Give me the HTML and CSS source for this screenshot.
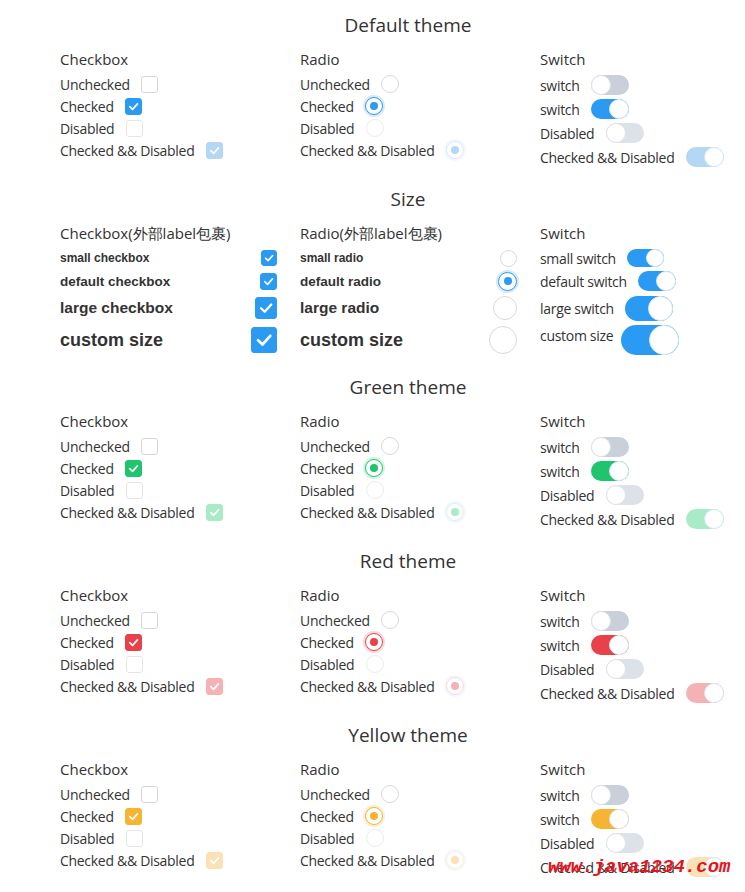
FILE: index.html
```html
<!DOCTYPE html>
<html lang="en">
<head>
    <meta charset="UTF-8">
    <meta name="viewport" content="width=device-width, initial-scale=1.0">
    <title>Checkbox / Radio / Switch</title>
    <link rel="stylesheet" href="styles.css">
</head>
<body>
    <div class="page">

        <!-- Default theme -->
        <div class="section theme-blue">
            <h2 class="section-title">Default theme</h2>
            <div class="grid">
                <div class="col">
                    <div class="col-title">Checkbox</div>
                    <div class="row">Unchecked <span class="cb"></span></div>
                    <div class="row">Checked <span class="cb on"><svg viewBox="0 0 16 16"><polyline points="4,8.2 7,11 12.2,5.2"/></svg></span></div>
                    <div class="row">Disabled <span class="cb off"></span></div>
                    <div class="row">Checked &amp;&amp; Disabled <span class="cb on-off"><svg viewBox="0 0 16 16"><polyline points="4,8.2 7,11 12.2,5.2"/></svg></span></div>
                </div>
                <div class="col">
                    <div class="col-title">Radio</div>
                    <div class="row">Unchecked <span class="rd"></span></div>
                    <div class="row">Checked <span class="rd on"></span></div>
                    <div class="row">Disabled <span class="rd off"></span></div>
                    <div class="row">Checked &amp;&amp; Disabled <span class="rd on-off"></span></div>
                </div>
                <div class="col">
                    <div class="col-title">Switch</div>
                    <div class="row sw-row">switch <span class="sw"></span></div>
                    <div class="row sw-row">switch <span class="sw on"></span></div>
                    <div class="row sw-row">Disabled <span class="sw off"></span></div>
                    <div class="row sw-row">Checked &amp;&amp; Disabled <span class="sw on-off"></span></div>
                </div>
            </div>
        </div>

        <!-- Size -->
        <div class="section theme-blue">
            <h2 class="section-title">Size</h2>
            <div class="grid">
                <div class="col">
                    <div class="col-title">Checkbox(外部label包裹)</div>
                    <label class="size-row s-small">small checkbox <span class="cb on"><svg viewBox="0 0 16 16"><polyline points="4,8.2 7,11 12.2,5.2"/></svg></span></label>
                    <label class="size-row s-default">default checkbox <span class="cb on"><svg viewBox="0 0 16 16"><polyline points="4,8.2 7,11 12.2,5.2"/></svg></span></label>
                    <label class="size-row s-large">large checkbox <span class="cb on"><svg viewBox="0 0 16 16"><polyline points="4,8.2 7,11 12.2,5.2"/></svg></span></label>
                    <label class="size-row s-custom">custom size <span class="cb on"><svg viewBox="0 0 16 16"><polyline points="4,8.2 7,11 12.2,5.2"/></svg></span></label>
                </div>
                <div class="col">
                    <div class="col-title">Radio(外部label包裹)</div>
                    <label class="size-row s-small">small radio <span class="rd"></span></label>
                    <label class="size-row s-default">default radio <span class="rd on"></span></label>
                    <label class="size-row s-large">large radio <span class="rd"></span></label>
                    <label class="size-row s-custom">custom size <span class="rd"></span></label>
                </div>
                <div class="col">
                    <div class="col-title">Switch</div>
                    <div class="row sw-size sw-small">small switch <span class="sw on"></span></div>
                    <div class="row sw-size sw-default">default switch <span class="sw on"></span></div>
                    <div class="row sw-size sw-large">large switch <span class="sw on"></span></div>
                    <div class="row sw-size sw-custom"><span class="sw-label">custom size</span> <span class="sw on"></span></div>
                </div>
            </div>
        </div>

        <!-- Green theme -->
        <div class="section theme-green">
            <h2 class="section-title">Green theme</h2>
            <div class="grid">
                <div class="col">
                    <div class="col-title">Checkbox</div>
                    <div class="row">Unchecked <span class="cb"></span></div>
                    <div class="row">Checked <span class="cb on"><svg viewBox="0 0 16 16"><polyline points="4,8.2 7,11 12.2,5.2"/></svg></span></div>
                    <div class="row">Disabled <span class="cb off"></span></div>
                    <div class="row">Checked &amp;&amp; Disabled <span class="cb on-off"><svg viewBox="0 0 16 16"><polyline points="4,8.2 7,11 12.2,5.2"/></svg></span></div>
                </div>
                <div class="col">
                    <div class="col-title">Radio</div>
                    <div class="row">Unchecked <span class="rd"></span></div>
                    <div class="row">Checked <span class="rd on"></span></div>
                    <div class="row">Disabled <span class="rd off"></span></div>
                    <div class="row">Checked &amp;&amp; Disabled <span class="rd on-off"></span></div>
                </div>
                <div class="col">
                    <div class="col-title">Switch</div>
                    <div class="row sw-row">switch <span class="sw"></span></div>
                    <div class="row sw-row">switch <span class="sw on"></span></div>
                    <div class="row sw-row">Disabled <span class="sw off"></span></div>
                    <div class="row sw-row">Checked &amp;&amp; Disabled <span class="sw on-off"></span></div>
                </div>
            </div>
        </div>

        <!-- Red theme -->
        <div class="section theme-red">
            <h2 class="section-title">Red theme</h2>
            <div class="grid">
                <div class="col">
                    <div class="col-title">Checkbox</div>
                    <div class="row">Unchecked <span class="cb"></span></div>
                    <div class="row">Checked <span class="cb on"><svg viewBox="0 0 16 16"><polyline points="4,8.2 7,11 12.2,5.2"/></svg></span></div>
                    <div class="row">Disabled <span class="cb off"></span></div>
                    <div class="row">Checked &amp;&amp; Disabled <span class="cb on-off"><svg viewBox="0 0 16 16"><polyline points="4,8.2 7,11 12.2,5.2"/></svg></span></div>
                </div>
                <div class="col">
                    <div class="col-title">Radio</div>
                    <div class="row">Unchecked <span class="rd"></span></div>
                    <div class="row">Checked <span class="rd on"></span></div>
                    <div class="row">Disabled <span class="rd off"></span></div>
                    <div class="row">Checked &amp;&amp; Disabled <span class="rd on-off"></span></div>
                </div>
                <div class="col">
                    <div class="col-title">Switch</div>
                    <div class="row sw-row">switch <span class="sw"></span></div>
                    <div class="row sw-row">switch <span class="sw on"></span></div>
                    <div class="row sw-row">Disabled <span class="sw off"></span></div>
                    <div class="row sw-row">Checked &amp;&amp; Disabled <span class="sw on-off"></span></div>
                </div>
            </div>
        </div>

        <!-- Yellow theme -->
        <div class="section theme-yellow">
            <h2 class="section-title">Yellow theme</h2>
            <div class="grid">
                <div class="col">
                    <div class="col-title">Checkbox</div>
                    <div class="row">Unchecked <span class="cb"></span></div>
                    <div class="row">Checked <span class="cb on"><svg viewBox="0 0 16 16"><polyline points="4,8.2 7,11 12.2,5.2"/></svg></span></div>
                    <div class="row">Disabled <span class="cb off"></span></div>
                    <div class="row">Checked &amp;&amp; Disabled <span class="cb on-off"><svg viewBox="0 0 16 16"><polyline points="4,8.2 7,11 12.2,5.2"/></svg></span></div>
                </div>
                <div class="col">
                    <div class="col-title">Radio</div>
                    <div class="row">Unchecked <span class="rd"></span></div>
                    <div class="row">Checked <span class="rd on"></span></div>
                    <div class="row">Disabled <span class="rd off"></span></div>
                    <div class="row">Checked &amp;&amp; Disabled <span class="rd on-off"></span></div>
                </div>
                <div class="col">
                    <div class="col-title">Switch</div>
                    <div class="row sw-row">switch <span class="sw"></span></div>
                    <div class="row sw-row">switch <span class="sw on"></span></div>
                    <div class="row sw-row">Disabled <span class="sw off"></span></div>
                    <div class="row sw-row">Checked &amp;&amp; Disabled <span class="sw on-off"></span></div>
                </div>
            </div>
        </div>

        <div class="watermark">www.java1234.com</div>
    </div>
</body>
</html>
```

FILE: styles.css
```css
body {
    margin: 0;
    font-family: "Open Sans", Arial, sans-serif;
    color: #333;
    background-color: #fff;
    overflow: hidden;
}

.page {
    position: relative;
    width: 696px;
    margin-left: 60px;
    padding-top: 8px;
}

/* theme colours */
.theme-blue {
    --main: #2a9af3;
    --light: #b3d7f4;
    --halo: #d6eafb;
}

.theme-green {
    --main: #1fc46c;
    --light: #a8ebc6;
    --halo: #d2f5e1;
}

.theme-red {
    --main: #e9414a;
    --light: #f5b2b5;
    --halo: #fad8da;
}

.theme-yellow {
    --main: #f5b431;
    --light: #fbe2b6;
    --halo: #fcefd4;
}

.section {
    padding-bottom: 13px;
}

.section-title {
    margin: 0 0 4px;
    font-size: 19px;
    font-weight: normal;
    line-height: 34px;
    text-align: center;
}

.grid {
    display: grid;
    grid-template-columns: 240px 240px 1fr;
}

.col-title {
    font-size: 15px;
    line-height: 27px;
}

.row {
    display: flex;
    align-items: center;
    height: 22px;
    font-size: 14px;
    letter-spacing: -0.3px;
    white-space: pre;
}

.sw-row {
    height: 24px;
}

/* checkbox */
.cb {
    display: inline-flex;
    box-sizing: border-box;
    width: 17px;
    height: 17px;
    margin-left: 8px;
    border: 1px solid #d6d6d6;
    border-radius: 3px;
    background-color: #fff;
}

.cb svg {
    width: 100%;
    height: 100%;
}

.cb polyline {
    fill: none;
    stroke: #fff;
    stroke-width: 1.8;
    stroke-linecap: round;
    stroke-linejoin: round;
}

.cb.on {
    border-color: var(--main);
    background-color: var(--main);
}

.cb.off {
    border-color: #e6e6e6;
}

.cb.on-off {
    border-color: var(--light);
    background-color: var(--light);
}

/* radio */
.rd {
    position: relative;
    display: inline-block;
    box-sizing: border-box;
    width: 18px;
    height: 18px;
    margin-left: 8px;
    border: 1px solid #d9d9d9;
    border-radius: 50%;
    background-color: #fff;
}

.rd.on {
    border-color: var(--main);
    box-shadow: 0 0 0 2px var(--halo);
}

.rd.on::after,
.rd.on-off::after {
    content: "";
    position: absolute;
    top: 50%;
    left: 50%;
    width: 8px;
    height: 8px;
    margin: -4px 0 0 -4px;
    border-radius: 50%;
    background-color: var(--main);
}

.rd.off {
    border-color: #ececec;
}

.rd.on-off {
    border-color: var(--halo);
    box-shadow: 0 0 0 2px #f4f8fc;
}

.rd.on-off::after {
    background-color: var(--light);
}

/* switch */
.sw {
    --w: 38px;
    --h: 20px;
    position: relative;
    display: inline-block;
    width: var(--w);
    height: var(--h);
    margin-left: 8px;
    border-radius: calc(var(--h) / 2);
    background-color: #c9d0da;
}

.sw::after {
    content: "";
    position: absolute;
    top: 0;
    left: 0;
    box-sizing: border-box;
    width: var(--h);
    height: var(--h);
    border: 1px solid #dfe3e8;
    border-radius: 50%;
    background-color: #fff;
}

.sw.on {
    background-color: var(--main);
}

.sw.on::after,
.sw.on-off::after {
    left: auto;
    right: 0;
    border-color: #dbe8f2;
}

.sw.off {
    background-color: #dde2e8;
}

.sw.on-off {
    background-color: var(--light);
}

/* size rows */
.size-row {
    display: flex;
    align-items: center;
    justify-content: space-between;
    width: 217px;
    font-weight: bold;
    font-family: "Liberation Sans", Arial, sans-serif;
}

.s-small {
    height: 22px;
    font-size: 12px;
}

.s-default {
    height: 24px;
    font-size: 13.5px;
}

.s-large {
    height: 30px;
    font-size: 15.5px;
}

.s-custom {
    height: 34px;
    font-size: 18px;
}

.s-small .cb {
    width: 16px;
    height: 16px;
}

.s-large .cb {
    width: 22px;
    height: 22px;
}

.s-custom .cb {
    width: 26px;
    height: 26px;
}

.s-small .rd {
    width: 17px;
    height: 17px;
}

.s-default .rd {
    width: 19px;
    height: 19px;
}

.s-large .rd {
    width: 24px;
    height: 24px;
}

.s-custom .rd {
    width: 28px;
    height: 28px;
}

.sw-small {
    height: 22px;
}

.sw-small .sw {
    --w: 37px;
    --h: 18px;
}

.sw-default {
    height: 24px;
}

.sw-large {
    height: 30px;
}

.sw-large .sw {
    --w: 48px;
    --h: 25px;
}

.sw-custom {
    height: 34px;
}

.sw-custom .sw {
    --w: 58px;
    --h: 30px;
}

.sw-custom .sw-label {
    margin-bottom: 10px;
}

.watermark {
    position: absolute;
    left: 488px;
    top: 856px;
    font-family: "Liberation Mono", monospace;
    font-size: 19px;
    font-weight: bold;
    font-style: italic;
    color: #e8141c;
}
```
